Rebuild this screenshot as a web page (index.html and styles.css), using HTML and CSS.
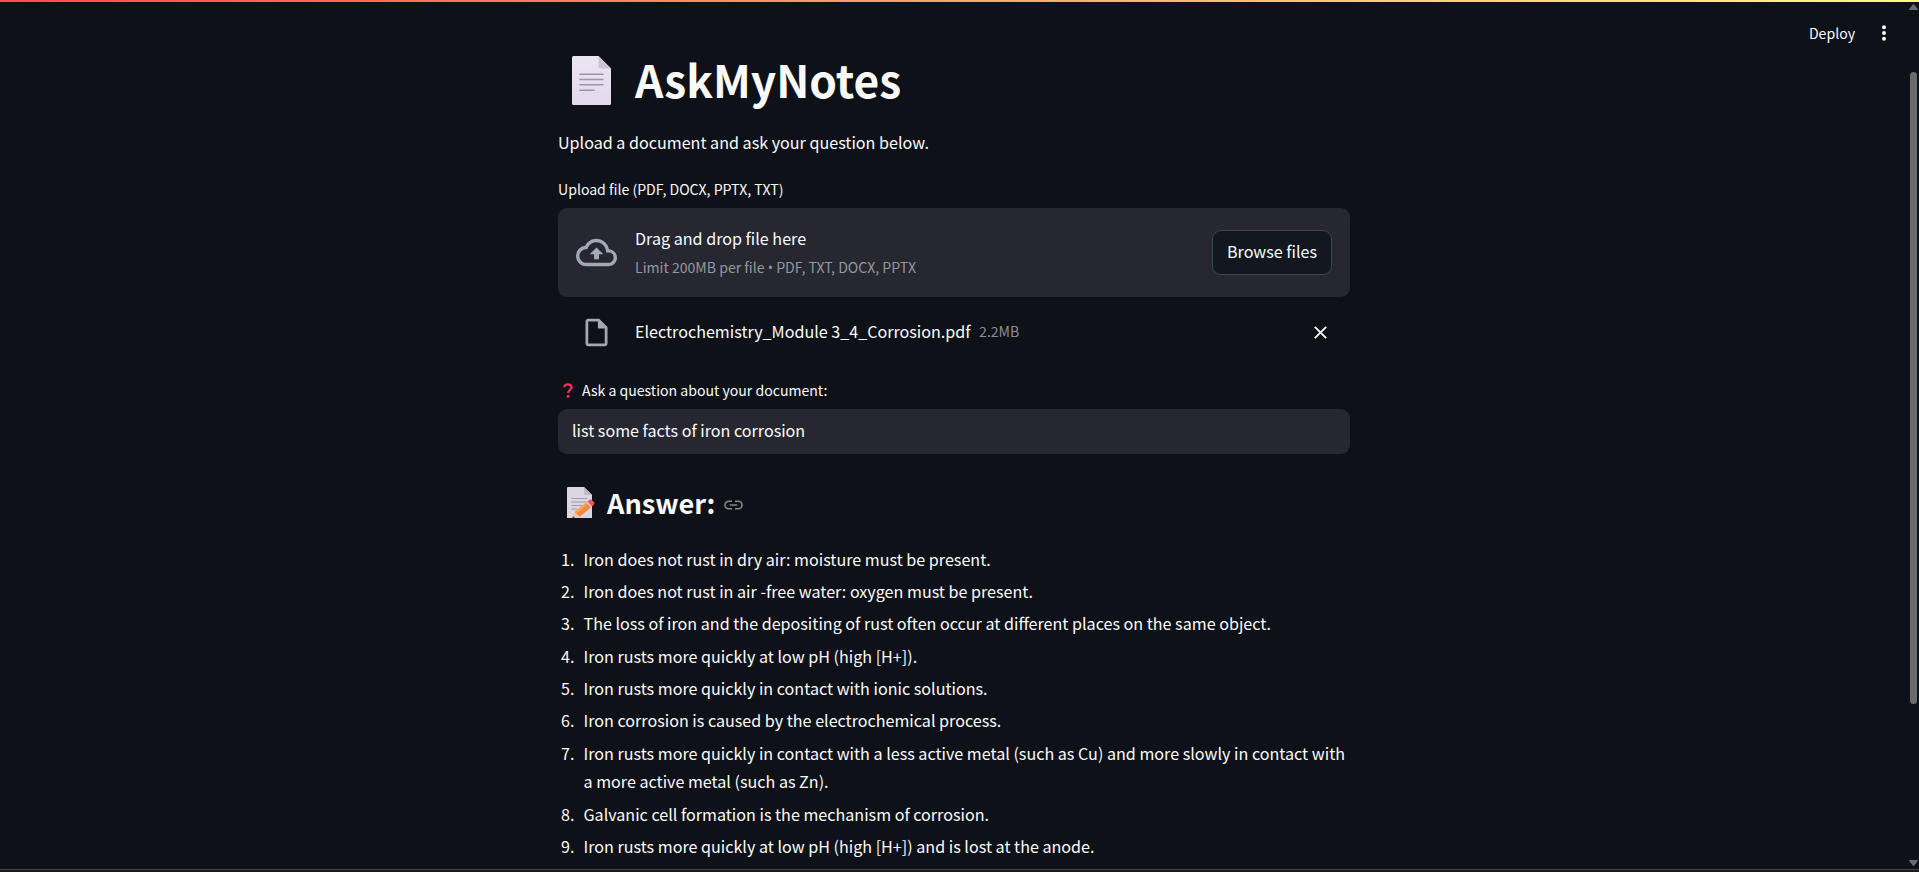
FILE: index.html
```html
<!DOCTYPE html>
<html lang="en">
<head>
<meta charset="utf-8">
<title>AskMyNotes</title>
<link rel="stylesheet" href="styles.css">
</head>
<body>
<div class="app">
  <header class="toolbar">
    <span class="deploy">Deploy</span>
    <svg class="kebab" viewBox="0 0 4 16"><circle cx="2" cy="2.2" r="2"/><circle cx="2" cy="8" r="2"/><circle cx="2" cy="13.8" r="2"/></svg>
  </header>
  <main class="scroll">
    <div class="column">
      <h1 class="title">
        <svg class="page-icon" viewBox="0 0 39 49">
          <defs><linearGradient id="pg" x1="0" y1="0" x2="0" y2="1"><stop offset="0" stop-color="#ece6f2"/><stop offset="1" stop-color="#e3d8ef"/></linearGradient></defs>
          <path fill="url(#pg)" d="M1.500 0H26.500L39 12.500V47.500Q39 49 37.500 49H1.500Q0 49 0 47.500V1.500Q0 0 1.500 0z"/>
          <path fill="#cbc4d1" d="M26.500 0L39 12.500H28Q26.500 12.500 26.500 11z"/>
          <path stroke="#9d95a5" stroke-width="1.500" stroke-linecap="round" d="M8 18.300H31M8 23.500H31M8 28.700H31M8 34.200H22"/>
        </svg>
        <span>AskMyNotes</span>
      </h1>
      <p class="intro">Upload a document and ask your question below.</p>
      <div class="label upload-label">Upload file (PDF, DOCX, PPTX, TXT)</div>
      <section class="dropzone">
        <svg class="cloud" viewBox="0 0 24 24"><path d="M19.350 10.040A7.490 7.490 0 0 0 12 4C9.110 4 6.600 5.640 5.350 8.040A5.994 5.994 0 0 0 0 14c0 3.310 2.690 6 6 6h13c2.760 0 5-2.240 5-5 0-2.640-2.050-4.780-4.650-4.960zM19 18H6c-2.210 0-4-1.790-4-4 0-2.050 1.530-3.760 3.560-3.970l1.070-.110.500-.950A5.469 5.469 0 0 1 12 6c2.620 0 4.880 1.860 5.390 4.430l.300 1.500 1.530.110A2.980 2.980 0 0 1 22 15c0 1.650-1.350 3-3 3zM8 13h2.550v3h2.900v-3H16l-4-4z"/></svg>
        <div class="drop-text">
          <span class="drop-title">Drag and drop file here</span>
          <span class="drop-limit">Limit 200MB per file <span class="bullet">•</span> PDF, TXT, DOCX, PPTX</span>
        </div>
        <button class="browse">Browse files</button>
      </section>
      <div class="file">
        <svg class="file-icon" viewBox="0 0 24 24"><path d="M14 2H6c-1.100 0-1.990.900-1.990 2L4 20c0 1.100.890 2 1.990 2H18c1.100 0 2-.900 2-2V8l-6-6zM6 20V4h7v5h5v11H6z"/></svg>
        <span class="file-name">Electrochemistry_Module 3_4_Corrosion.pdf</span>
        <span class="file-size">2.2MB</span>
        <svg class="close" viewBox="0 0 13 13"><path d="M.8.8L12.200 12.200M12.200.8L.8 12.200"/></svg>
      </div>
      <div class="label ask-label">
        <svg class="question" viewBox="0 0 10 15"><path d="M1.300 4.200C1.300 2.300 2.700 1.400 4.800 1.400c2.200 0 3.700 1 3.700 2.900 0 2.600-3.300 2.500-3.300 5.600"/><circle cx="5.100" cy="13.200" r="1.500"/></svg>
        <span>Ask a question about your document:</span>
      </div>
      <div class="input">list some facts of iron corrosion</div>
      <h3 class="answer">
        <svg class="memo" viewBox="0 0 28 31">
          <path fill="#dcd5e3" d="M1 0H17L25 8V31H0V1Q0 0 1 0z"/>
          <path fill="#bfb8c6" d="M17 0L25 8H17z"/>
          <path stroke="#a39cab" stroke-width="1.200" d="M4.500 11.500H20M4.500 15H20M4.500 18.500H16M4.500 22H10"/>
          <path fill="#f8893f" d="M7.500 25L20.500 14.500L25 19.500L12.500 30z"/>
          <path fill="#ffa353" d="M7.500 25L20.500 14.500L22 16L9 26.600z"/>
          <path fill="#e9c9a8" d="M7.500 25L12.500 30L11 31H5.300z"/>
          <path fill="#694a50" d="M6 29L8 31H5.300z"/>
          <path fill="#d8d0dc" d="M19.300 15.500L20.500 14.500L25 19.500L23.800 20.500z"/>
          <path fill="#f8555a" d="M20.500 14.500L22.800 12.500Q23.800 11.900 24.800 12.900L27 15.200Q27.800 16.200 27 17.200L25 19.500z"/>
        </svg>
        <span>Answer:</span>
        <svg class="link" viewBox="0 0 20 10"><path d="M8.500 1H5a4 4 0 0 0 0 8h3.500M11.500 1H15a4 4 0 0 1 0 8h-3.500M6 5h8"/></svg>
      </h3>
      <ol class="facts">
        <li>Iron does not rust in dry air: moisture must be present.</li>
        <li>Iron does not rust in air -free water: oxygen must be present.</li>
        <li>The loss of iron and the depositing of rust often occur at different places on the same object.</li>
        <li>Iron rusts more quickly at low pH (high [H+]).</li>
        <li>Iron rusts more quickly in contact with ionic solutions.</li>
        <li>Iron corrosion is caused by the electrochemical process.</li>
        <li>Iron rusts more quickly in contact with a less active metal (such as Cu) and more slowly in contact with a more active metal (such as Zn).</li>
        <li>Galvanic cell formation is the mechanism of corrosion.</li>
        <li>Iron rusts more quickly at low pH (high [H+]) and is lost at the anode.</li>
      </ol>
    </div>
  </main>
  <aside class="scrollbar">
    <svg class="arrow" viewBox="0 0 9 6"><path d="M0 6Q0 5 1 4L3.500 .7Q4.500-.3 5.500 .7L8 4Q9 5 9 6z"/></svg>
    <div class="track"><div class="thumb"></div></div>
    <svg class="arrow" viewBox="0 0 9 6"><path d="M0 0Q0 1 1 2L3.500 5.300Q4.500 6.300 5.500 5.300L8 2Q9 1 9 0z"/></svg>
  </aside>
</div>
<div class="bottom-edge"></div>
</body>
</html>
```
FILE: styles.css
```css
* { box-sizing: border-box; }
body {
  margin: 0;
  height: 872px;
  display: flex;
  flex-direction: column;
  overflow: hidden;
  background: #0e1117;
  color: #fafafa;
  font-family: "Noto Sans CJK SC", "Noto Sans", sans-serif;
  font-size: 16.120px;
  line-height: 28.800px;
}
svg { display: block; flex: none; fill: none; }
.app {
  position: relative;
  flex: 1;
  min-height: 0;
  display: flex;
  overflow: hidden;
}
.app::before {
  content: "";
  position: absolute;
  inset: 0 0 auto;
  height: 2px;
  background: linear-gradient(90deg, #ff4b4b, #fffd80);
}
.toolbar {
  position: absolute;
  top: 22px;
  right: 33px;
  display: flex;
  align-items: center;
  gap: 27px;
  line-height: 22px;
}
.deploy { font-size: 14.100px; }
.kebab { width: 4px; height: 16px; fill: #fafafa; }
.scroll { flex: 1; padding: 49px 0 0 3px; }
.column { width: 792px; margin: 0 auto; }
.title {
  display: flex;
  align-items: center;
  gap: 24px;
  margin: 0 0 19px;
  padding-left: 14px;
  font-size: 44.300px;
  line-height: 60px;
  font-weight: 700;
}
.page-icon { width: 39px; height: 49px; margin-top: 3px; }
.intro { margin: 0 0 21px; }
.label { font-size: 14.080px; line-height: 22px; }
.dropzone {
  display: flex;
  align-items: center;
  height: 89px;
  margin-top: 8px;
  padding: 0 18px;
  border-radius: 9px;
  background: #262730;
}
.cloud { width: 41px; height: 41px; margin-right: 18px; fill: #a3a8b8; }
.drop-text { display: flex; flex-direction: column; flex: 1; padding-top: 2px; }
.drop-limit { font-size: 14.080px; color: #96979c; }
.drop-title { line-height: 28.300px; }
.bullet { font-family: "Open Sans", sans-serif; }
.browse {
  width: 120px;
  height: 45px;
  padding: 0 0 2px;
  border: 1px solid #41444c;
  border-radius: 9px;
  background: #131720;
  color: inherit;
  font: inherit;
}
.file {
  display: flex;
  align-items: center;
  height: 36px;
  margin: 18px 23px 28.500px 22px;
}
.file-icon { width: 33px; height: 33px; margin-right: 22px; fill: #a3a8b8; }
.file-name, .file-size { margin-top: -3px; }
.file-size { margin-left: 8.500px; font-size: 14.080px; color: #8b8d91; }
.close { width: 13px; height: 13px; margin-left: auto; stroke: #fafafa; stroke-width: 1.800; }
.ask-label { display: flex; align-items: center; gap: 9px; padding-left: 5px; }
.question { width: 10px; height: 15px; stroke: #f0315a; stroke-width: 2.300; }
.question circle { fill: #f0315a; stroke: none; }
.input {
  height: 45px;
  margin: 8px 0 30px;
  padding-left: 14px;
  border-radius: 9px;
  background: #262730;
  line-height: 43px;
}
.answer {
  display: flex;
  align-items: center;
  margin: 0 0 24.500px;
  padding-left: 9px;
  font-size: 27.200px;
  line-height: 36px;
  font-weight: 700;
}
.memo { width: 28px; height: 31px; margin: 1px 12px 0 0; }
.link { width: 19px; height: 10px; margin: 6px 0 0 8.500px; stroke: #85878c; stroke-width: 1.700; }
.facts { margin: 0; padding-left: 25.500px; list-style: none; counter-reset: fact; }
.facts li { margin-bottom: 3.520px; counter-increment: fact; }
.facts li::before {
  content: counter(fact) ".";
  display: inline-block;
  width: 22.500px;
  margin-left: -22.500px;
}
.scrollbar {
  display: flex;
  flex-direction: column;
  align-items: center;
  width: 14px;
  padding: 4px 0 3px 3px;
}
.arrow { width: 9px; height: 6px; fill: #6b6b6f; }
.track { flex: 1; padding-top: 62px; }
.thumb { width: 7px; height: 632px; border-radius: 4px; background: #6b6b6f; }
.bottom-edge { height: 3px; border-top: 1px solid #444; background: #1e1b1b; }
```
